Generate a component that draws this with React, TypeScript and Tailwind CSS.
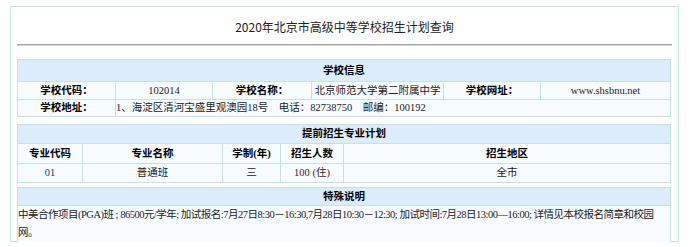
import React from 'react';

const font = { fontFamily: '"Liberation Serif", "Noto Sans CJK SC", serif' };

const cell = 'border border-[#c5e4de] p-0 text-center align-middle';
const head = 'bg-[#ddecfb] border border-[#c5e4de] p-0 text-center font-bold text-black';

export default function App() {
  return (
    <div className="bg-white pl-[10px] pt-[6px] text-[10.5px] leading-[14px] text-[#222]" style={font}>
      <div className="w-[669px] h-[236px] border border-[#c6e7e0] px-[6px]">
        <div className="h-[37px] flex items-center justify-center text-[12px] text-[#222] pt-[2px]" style={{ fontFamily: '"Noto Sans CJK SC", sans-serif' }}>
          2020年北京市高级中等学校招生计划查询
        </div>
        <div className="h-[2px] bg-[#a6a6a6] border-b border-[#d6d6d6]" />

        <table className="mt-[13px] w-[654px] table-fixed border-collapse">
          <colgroup>
            <col className="w-[98px]" />
            <col className="w-[97px]" />
            <col className="w-[99px]" />
            <col className="w-[132px]" />
            <col className="w-[97px]" />
            <col />
          </colgroup>
          <tbody>
            <tr className="h-[22px]">
              <td colSpan={6} className={head}>学校信息</td>
            </tr>
            <tr className="h-[18px] bg-[#f8fbff]">
              <td className={cell + ' font-bold text-black'}>学校代码：</td>
              <td className={cell}>102014</td>
              <td className={cell + ' font-bold text-black'}>学校名称：</td>
              <td className={cell}>北京师范大学第二附属中学</td>
              <td className={cell + ' font-bold text-black'}>学校网址：</td>
              <td className={cell}>www.shsbnu.net</td>
            </tr>
            <tr className="h-[17px] bg-[#f8fbff]">
              <td className={cell + ' font-bold text-black'}>学校地址：</td>
              <td colSpan={5} className="border border-[#c5e4de] p-0 text-left whitespace-nowrap">
                1、海淀区清河宝盛里观澳园18号　电话：82738750　邮编：100192
              </td>
            </tr>
          </tbody>
        </table>

        <table className="mt-[7px] w-[654px] table-fixed border-collapse">
          <colgroup>
            <col className="w-[65px]" />
            <col className="w-[140px]" />
            <col className="w-[58px]" />
            <col className="w-[63px]" />
            <col />
          </colgroup>
          <tbody>
            <tr className="h-[19px]">
              <td colSpan={5} className={head}>提前招生专业计划</td>
            </tr>
            <tr className="h-[20px] bg-[#f8fbff] font-bold text-black">
              <td className={cell}>专业代码</td>
              <td className={cell}>专业名称</td>
              <td className={cell}>学制(年)</td>
              <td className={cell}>招生人数</td>
              <td className={cell}>招生地区</td>
            </tr>
            <tr className="h-[19px] bg-[#f8fbff]">
              <td className={cell + ' text-[#1c3766]'}>01</td>
              <td className={cell}>普通班</td>
              <td className={cell}>三</td>
              <td className={cell + ' text-[#3a2a1a]'}>100 (住)</td>
              <td className={cell}>全市</td>
            </tr>
          </tbody>
        </table>

        <table className="mt-[4px] w-[654px] table-fixed border-collapse">
          <tbody>
            <tr className="h-[18px]">
              <td className={head}>特殊说明</td>
            </tr>
            <tr className="h-[35px] bg-[#f8fbff]">
              <td className="border border-[#c5e4de] p-0 pr-[10px] text-left align-top leading-[18px] tracking-[-0.5px]">
                中美合作项目(PGA)班 ; 86500元/学年; 加试报名:7月27日8:30－16:30,7月28日10:30－12:30; 加试时间:7月28日13:00—16:00; 详情见本校报名简章和校园网。
              </td>
            </tr>
          </tbody>
        </table>
      </div>
    </div>
  );
}
